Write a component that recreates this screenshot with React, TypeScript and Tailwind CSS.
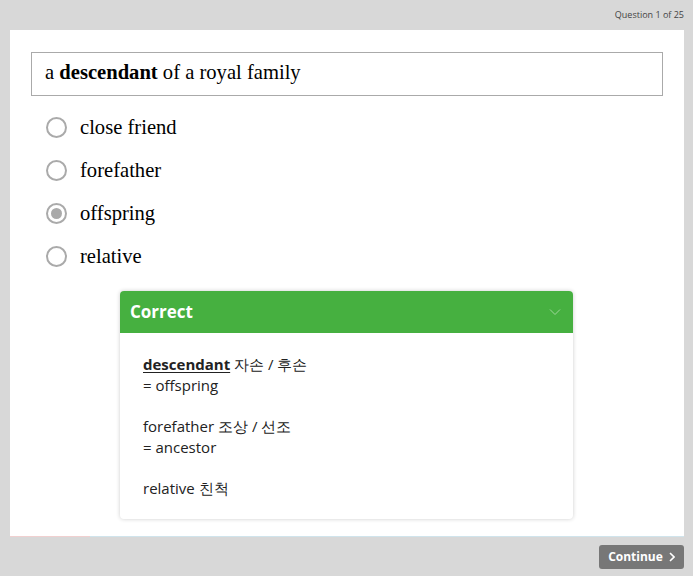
const options = ['close friend', 'forefather', 'offspring', 'relative']

export default function App() {
  const selected = 'offspring'

  return (
    <div className="w-[693px] h-[576px] bg-[#d8d8d8] flex flex-col font-['Open_Sans',sans-serif] overflow-hidden">
      {/* top bar */}
      <div className="h-[30px] flex items-center justify-end pr-[9px] text-[9px] text-[#444]">
        Question 1 of 25
      </div>

      {/* main panel */}
      <div className="ml-[10px] w-[674px] h-[506px] bg-white flex flex-col">
        <div className="mt-[22px] ml-[21px] w-[632px] h-[44px] border border-[#aaa] flex items-center pl-[13px] pb-[3px] font-['Liberation_Serif',serif] text-[20.6px] text-black">
          <span>
            a <b>descendant</b> of a royal family
          </span>
        </div>

        <div className="mt-[10px] ml-[36px] flex flex-col">
          {options.map((o) => (
            <div key={o} className="h-[43px] flex items-center">
              <span className="w-[21px] h-[21px] rounded-full border-2 border-[#aaa] flex items-center justify-center">
                {o === selected && <span className="w-[11px] h-[11px] rounded-full bg-[#aaa]" />}
              </span>
              <span className="ml-[13px] font-['Liberation_Serif',serif] text-[20.6px] text-black">{o}</span>
            </div>
          ))}
        </div>

        {/* feedback */}
        <div className="mt-[13px] ml-[110px] w-[453px] h-[228px] rounded-[4px] bg-white shadow-[0_0_4px_rgba(0,0,0,0.2)] overflow-hidden">
          <div className="h-[42px] bg-[#46b040] flex items-center justify-between pl-[10px] pr-[12px]">
            <span className="text-white font-bold text-[17px]">Correct</span>
            <svg width="12" height="8" viewBox="0 0 12 8" fill="none" stroke="#9fd69a" strokeWidth="1">
              <path d="M1 1.5l5 5 5-5" />
            </svg>
          </div>
          <div className="pt-[21px] pl-[23px] text-[15px] leading-[21px] text-[#222]">
            <div>
              <b className="underline underline-offset-2">descendant</b> 자손 / 후손
            </div>
            <div>= offspring</div>
            <div className="mt-[20px]">forefather 조상 / 선조</div>
            <div>= ancestor</div>
            <div className="mt-[20px]">relative 친척</div>
          </div>
        </div>
      </div>
      <div className="ml-[10px] w-[674px] h-px flex">
        <div className="w-[80px] bg-[#f0d0d0]" />
        <div className="flex-1 bg-[#d0e4ec]" />
      </div>

      {/* footer */}
      <div className="flex justify-end pr-[9px] mt-[8px]">
        <button className="w-[85px] h-[24px] rounded-[3px] bg-[#777] text-white text-[12px] font-bold flex items-center justify-center gap-[6px]">
          Continue
          <svg width="6" height="10" viewBox="0 0 6 10" fill="none" stroke="white" strokeWidth="1.6">
            <path d="M1 1l4 4-4 4" />
          </svg>
        </button>
      </div>
    </div>
  )
}
